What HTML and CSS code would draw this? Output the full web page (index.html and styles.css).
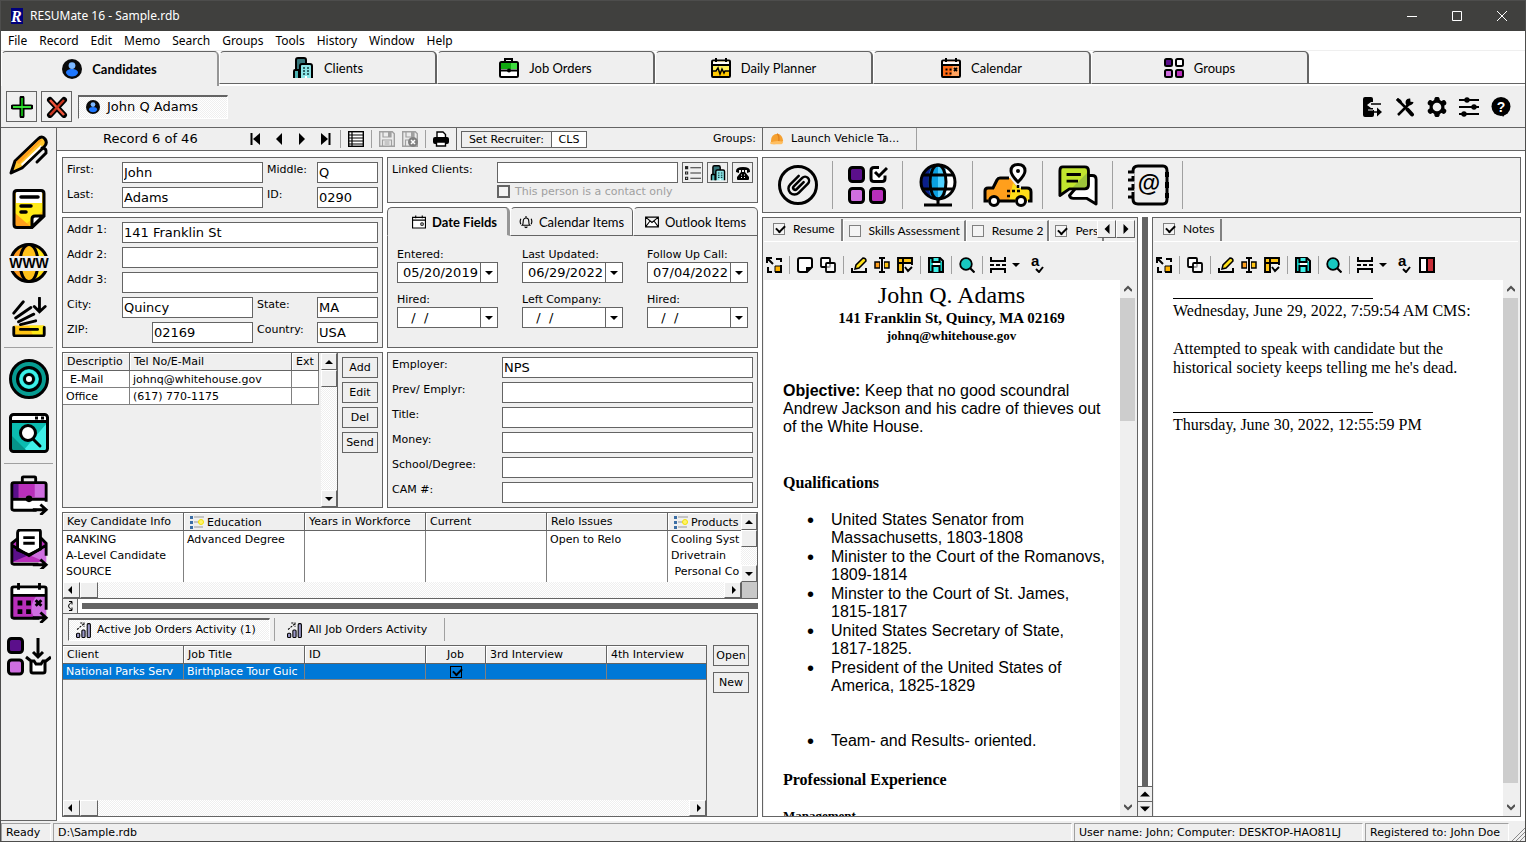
FILE: index.html
```html
<!DOCTYPE html>
<html lang="en">
<head>
<meta charset="utf-8">
<title>RESUMate 16 - Sample.rdb</title>
<link rel="stylesheet" href="styles.css">
</head>
<body>
<svg class="sprite" aria-hidden="true">
  <symbol id="person" viewBox="0 0 20 20"><circle cx="10" cy="10" r="10" fill="#0a0a0a"/><circle cx="10" cy="6.600" r="3.400" fill="#7db8ff"/><path d="M4 14c0-3 3-4 6-4s6 1 6 4c-1 2.500-3.500 3.500-6 3.500S5 16.500 4 14z" fill="#1f78ff"/></symbol>
  <symbol id="city" viewBox="0 0 20 22"><path d="M3 14V3q0-2 2-2h6q2 0 2 2v4" fill="#35757a" stroke="#000" stroke-width="2"/><path d="M1 21v-7q0-1 1-1h4v8" fill="#4db3b3" stroke="#000" stroke-width="2"/><path d="M7 21V9q0-2 2-2h8q2 0 2 2v12" fill="#8ce4e6" stroke="#000" stroke-width="2"/><path d="M10 11h2M14 11h2M10 14h2M14 14h2M10 17h2M14 17h2" stroke="#10383c" stroke-width="1.500"/><path d="M12 21v-2h2v2" fill="#fff"/></symbol>
  <symbol id="jobs" viewBox="0 0 20 20"><path d="M6 4V1h7v3" fill="none" stroke="#000" stroke-width="2"/><rect x="1" y="4" width="18" height="15" rx="1.500" fill="#fff" stroke="#000" stroke-width="2"/><path d="M2 5h16v6H2z" fill="#0fa80f"/><path d="M12 5h6v6h-6z" fill="#3fdc3f"/><path d="M1 12.500h18" stroke="#000" stroke-width="2"/><circle cx="10" cy="12.500" r="2" fill="#000"/></symbol>
  <symbol id="planner" viewBox="0 0 20 20"><rect x="1" y="2.500" width="18" height="16.500" rx="1" fill="#ffc800" stroke="#000" stroke-width="2"/><path d="M2 7h16v6H2z" fill="#fff05a"/><path d="M2 3.500h16V6H2z" fill="#fff"/><path d="M1 7h18M5 0v4M15 0v4" stroke="#000" stroke-width="2"/><path d="M2 13h3l2-3 2 6 2-5 2 4 1-2h4" fill="none" stroke="#000" stroke-width="1.500"/></symbol>
  <symbol id="calendar" viewBox="0 0 20 20"><rect x="1" y="2.500" width="18" height="16.500" rx="1" fill="#ff6a14" stroke="#000" stroke-width="2"/><path d="M12 7h6v11h-8z" fill="#ffa35f"/><path d="M2 3.500h16V6H2z" fill="#fff"/><path d="M1 7h18M5 0v4M15 0v4" stroke="#000" stroke-width="2"/><path d="M4.500 11.500h2m2 0h2M4.500 15.500h2m2 0h2M13 10l3 3m0-3l-3 3" stroke="#000" stroke-width="1.800"/></symbol>
  <symbol id="groups" viewBox="0 0 20 20"><g stroke="#000" stroke-width="2"><rect x="1" y="1" width="7" height="7" rx="1.500" fill="#5b0f8b"/><rect x="12" y="1" width="7" height="7" rx="1.500" fill="#fff"/><rect x="1" y="12" width="7" height="7" rx="1.500" fill="#cf6ee0"/><rect x="12" y="12" width="7" height="7" rx="1.500" fill="#b92fbb"/></g></symbol>
  <symbol id="plus" viewBox="0 0 22 22"><path d="M11 2v18M2 11h18" stroke="#000" stroke-width="5" stroke-linecap="round"/><path d="M11 2v18" stroke="#12a812" stroke-width="2"/><path d="M2 11h18" stroke="#38e038" stroke-width="2"/></symbol>
  <symbol id="cross" viewBox="0 0 22 22"><path d="M4 4l14 15M18 4L4 19" stroke="#000" stroke-width="6" stroke-linecap="round"/><path d="M4 4l14 15" stroke="#f0553a" stroke-width="2.500"/><path d="M18 4L4 19" stroke="#c9341f" stroke-width="2.500"/></symbol>
  <symbol id="exit" viewBox="0 0 20 20"><path d="M2 0h6q2 0 2 2v3H8L4 8l4 3h2v2h1v5q0 2-2 2H2q-2 0-2-2V2q0-2 2-2z"/><path d="M8 7h10M11 15h4" stroke="#000" stroke-width="1.600"/><path d="M14 10.500l5 4.500-5 4.500z"/><path d="M5 13h5" stroke="#efefef"/></symbol>
  <symbol id="tools" viewBox="0 0 20 20"><path d="M3 18L14 7M2 2l9 9" stroke="#000" stroke-width="2.500"/><path d="M12.500 12.500l4.500 5" stroke="#000" stroke-width="4" stroke-linecap="round"/><path d="M1 3l2-2 3 2 1 2-1.500 1.500L4 6z"/><path d="M18.500 5l-3-.3-.3-3.200c-4-.5-5.500 3-4 6.300 3 1.500 7 0 7.300-2.800z"/></symbol>
  <symbol id="gear" viewBox="0 0 20 20"><path d="M10 2.500v15M3.500 6l13 8M3.500 14l13-8" stroke="#000" stroke-width="5.500" stroke-linecap="round"/><circle cx="10" cy="10" r="7.500"/><circle cx="10" cy="10" r="4.300" fill="#efefef"/></symbol>
  <symbol id="sliders" viewBox="0 0 20 20"><path d="M0 3h20M0 10h20M0 17h20" stroke="#000" stroke-width="2"/><circle cx="8" cy="3" r="2.700"/><circle cx="15" cy="10" r="2.700"/><circle cx="5" cy="17" r="2.700"/></symbol>
  <symbol id="help" viewBox="0 0 20 20"><circle cx="10" cy="9.500" r="9.500"/><path d="M9 14h7l-4 6z"/><text x="10" y="14.500" text-anchor="middle" font-family="Liberation Sans, sans-serif" font-size="14" font-weight="700" fill="#fff">?</text></symbol>
  <symbol id="first" viewBox="0 0 12 12"><path d="M1.500 0v12" stroke="#000" stroke-width="2"/><path d="M10 0v12L3 6z"/></symbol>
  <symbol id="prev" viewBox="0 0 12 12"><path d="M9 0v12L3 6z"/></symbol>
  <symbol id="next" viewBox="0 0 12 12"><path d="M3 0v12l6-6z"/></symbol>
  <symbol id="last" viewBox="0 0 12 12"><path d="M10.500 0v12" stroke="#000" stroke-width="2"/><path d="M2 0v12l7-6z"/></symbol>
  <symbol id="list" viewBox="0 0 16 16"><rect x=".7" y=".7" width="14.600" height="14.600" fill="#fff" stroke="#000" stroke-width="1.400"/><path d="M1 4h14M1 7h14M1 10h14M1 13h14M4 1v14" stroke="#000" stroke-width="1.200"/></symbol>
  <symbol id="disk" viewBox="0 0 16 16"><path d="M.7.700h12.600l2 2v12.600H.7z" fill="#ececec" stroke="#a0a0a0" stroke-width="1.400"/><path d="M4 1v5h8V1M3.500 15V9h9v6M5.500 11h5M5.500 13h5" fill="none" stroke="#a0a0a0" stroke-width="1.200"/><path d="M9 1h3v5H9z" fill="#a0a0a0"/></symbol>
  <symbol id="diskx" viewBox="0 0 16 16"><path d="M.7.700h12.600l2 2v12.600H.7z" fill="#ececec" stroke="#a0a0a0" stroke-width="1.400"/><path d="M4 1v5h8V1M3.500 15V9h5" fill="none" stroke="#a0a0a0" stroke-width="1.200"/><path d="M9 1h3v5H9z" fill="#a0a0a0"/><circle cx="11" cy="11" r="5" fill="#808080"/><path d="M9 9l4 4m0-4l-4 4" stroke="#fff" stroke-width="1.500"/></symbol>
  <symbol id="printer" viewBox="0 0 16 16"><path d="M4 6V1h6l2.500 2.500V6" fill="#fff" stroke="#000" stroke-width="1.400"/><rect y="6" width="16" height="7" rx="2"/><path d="M3.500 11h9v4h-9z" fill="#fff" stroke="#000" stroke-width="1.400"/></symbol>
  <symbol id="pencil" viewBox="0 0 40 40"><path d="M2 38l4-12L29 4q4-4 7 0 3 4-1 8L13 33z" fill="#ffc72e" stroke="#000" stroke-width="3" stroke-linejoin="round"/><path d="M7 27L30 5q2-1 3 0L10 29z" fill="#ff9f1c"/><path d="M33 12l-20 19-1-2 20-19z" fill="#fff"/><path d="M33 13q5 0 4 5l-9 9" fill="none" stroke="#000" stroke-width="3" stroke-linecap="round"/></symbol>
  <symbol id="note" viewBox="0 0 40 40"><path d="M8 1.500h24q3 0 3 3V27L23 38.500H8q-3 0-3-3v-31q0-3 3-3z" fill="#ffc414"/><path d="M6 14h28v8L14 37H6z" fill="#ffea18"/><path d="M6 24L22 38H6z" fill="#ff9f1c"/><path d="M7 2h26v12H7z" fill="#fff"/><path d="M34 27H26q-3 0-3 3v8z" fill="#fff" stroke="#000" stroke-width="3" stroke-linejoin="round"/><path d="M8 1.500h24q3 0 3 3V27L23 38.500H8q-3 0-3-3v-31q0-3 3-3z" fill="none" stroke="#000" stroke-width="3"/><path d="M12 8h17M12 17h10M12 23h5" stroke="#000" stroke-width="3.500" stroke-linecap="round"/></symbol>
  <symbol id="www" viewBox="0 0 40 40"><circle cx="20" cy="20" r="18.500" fill="#ffc21a"/><path d="M6 9L20 2 10 15H3zM6 31l8 6-4-9H3z" fill="#ff9c1e"/><path d="M28 4l8 10h-8zM28 36l8-10h-8z" fill="#ffea18"/><g fill="none" stroke="#000" stroke-width="3"><circle cx="20" cy="20" r="18.500"/><ellipse cx="20" cy="20" rx="9" ry="18.500"/></g><path d="M0 13h40v15H0z" fill="#efefef"/><text x="20" y="25" text-anchor="middle" font-family="Liberation Sans, sans-serif" font-size="14" font-weight="700">WWW</text></symbol>
  <symbol id="stack" viewBox="0 0 40 42"><path d="M4 30h32v10H4z" fill="#ffc414"/><path d="M20 30h16v10H24z" fill="#ffea18"/><path d="M4 32v7q0 2 2 2h28q2 0 2-2v-7M11 34h18M11 29l16-4M9 26l16-8M6 22L22 11M4 17L14 5" fill="none" stroke="#000" stroke-width="3" stroke-linecap="round"/><path d="M31 1v14M25.500 10L31 15.500 37 10" fill="none" stroke="#000" stroke-width="3" stroke-linecap="round"/></symbol>
  <symbol id="target" viewBox="0 0 40 40"><g stroke="#000" stroke-width="3"><circle cx="20" cy="20" r="18.500" fill="#069c92"/><circle cx="20" cy="20" r="11.500" fill="#08bdb0"/><circle cx="20" cy="20" r="4.500" fill="#fff"/></g><circle cx="20" cy="20" r="8" fill="none" stroke="#3fefe8" stroke-width="3"/></symbol>
  <symbol id="searchwin" viewBox="0 0 40 40"><rect x="1.500" y="1.500" width="37" height="37" rx="3" fill="#0bbcb0"/><path d="M38 10v28H14z" fill="#3fefe8"/><path d="M2 22l16 16H2z" fill="#069389"/><path d="M3 2h34v6H3z" fill="#fff"/><rect x="1.500" y="1.500" width="37" height="37" rx="3" fill="none" stroke="#000" stroke-width="3"/><path d="M2 8.500h36M24 26l7 7" stroke="#000" stroke-width="3" stroke-linecap="round"/><circle cx="19" cy="20" r="7.500" fill="#fff" stroke="#000" stroke-width="3"/><path d="M26 5h3m3 0h3" stroke="#000" stroke-width="3"/></symbol>
  <symbol id="jobarrow" viewBox="0 0 40 42"><rect x="1.500" y="8" width="37" height="29" rx="2" fill="#fff"/><path d="M2 8h36v16H2z" fill="#b92fbb"/><path d="M2 8h7v16H2z" fill="#5b0f8b"/><path d="M26 8h12v16H26z" fill="#cf6ee0"/><path d="M38 28V10q0-2-2-2H4q-2 0-2 2v25q0 2 2 2h24M2 25.500h36M13 7V3q0-1 1-1h12q1 0 1 1v4" fill="none" stroke="#000" stroke-width="3"/><circle cx="20" cy="25" r="3.500"/><path d="M24 36.500h13M32 31l6 5.500-6 5.500" fill="none" stroke="#000" stroke-width="3"/></symbol>
  <symbol id="mailarrow" viewBox="0 0 40 42"><path d="M2 15L20 2l18 13v20H2z" fill="#b92fbb"/><path d="M2 16l16 12L2 35z" fill="#5b0f8b"/><path d="M22 28l16-12v19z" fill="#cf6ee0"/><path d="M8 22V4q0-3 3-3h19q2 0 2 2v18L20 27z" fill="#fff" stroke="#000" stroke-width="3"/><path d="M8 10l-6 5v20q0 2 2 2h26M32 9l6 6v13M2 17l18 11 18-11M14 9h12M14 15h12" fill="none" stroke="#000" stroke-width="3"/><path d="M24 37.500h13M32 32l6 5.500-6 5.500" fill="none" stroke="#000" stroke-width="3"/></symbol>
  <symbol id="calarrow" viewBox="0 0 40 42"><path d="M2 5h36v32H2z" fill="#b92fbb"/><path d="M38 12v25H26q-8-12 3-25z" fill="#cf6ee0"/><path d="M2 4h36v8H2z" fill="#fff"/><path d="M38 28V6q0-2-2-2H4q-2 0-2 2v29q0 2 2 2h27M2 13h36M9 0v7M31 0v7" fill="none" stroke="#000" stroke-width="3"/><path d="M8 21h5M17 21h5M8 30h5M17 30h5" stroke="#000" stroke-width="5"/><path d="M27 18l6 6m0-6l-6 6M24 36.500h13M32 31l6 5.500-6 5.500" fill="none" stroke="#000" stroke-width="3"/></symbol>
  <symbol id="groupbox" viewBox="0 0 44 40"><g stroke="#000" stroke-width="3"><rect x="1.500" y="1.500" width="14" height="14" rx="3" fill="#5b0f8b"/><rect x="1.500" y="23" width="14" height="14" rx="3" fill="#cf6ee0"/><path d="M24 25v9q0 2 2 2h10q2 0 2-2v-9" fill="#fff"/><path d="M19 20l5 4h3l2 3h5l2-3h3l5-4M31 1v18M26 15l5 5 5-5" fill="none"/></g></symbol>
  <symbol id="bullets" viewBox="0 0 15 14"><path d="M5 2h10M5 7h10M5 12h10" stroke="#333"/><path d="M0 .500h3v3H0z" fill="#222"/><path d="M.5 6h2v2h-2zM.5 11h2v2h-2z" fill="#fff" stroke="#222"/></symbol>
  <symbol id="phone" viewBox="0 0 14 14"><path d="M0 5q0-4 7-4t7 4v1l-3 1V4H3v3L0 6z"/><path d="M5 4v2l-4 5v2q0 1 1 1h10q1 0 1-1v-2L9 6V4H8v2H6V4z"/><path d="M5 9h1m2 0h1M5 11.500h1m2 0h1" stroke="#fff"/></symbol>
  <symbol id="calsmall" viewBox="0 0 15 14"><path d="M.6 2h13.800v11.400H.6zM.6 5h13.800M4 0v3M11 0v3" fill="#fff" stroke="#000" stroke-width="1.200"/><path d="M9.500 8h2.500v2.500H9.500z" fill="none" stroke="#000"/></symbol>
  <symbol id="bell" viewBox="0 0 15 15"><path d="M3.500 11q1-1 1-4c0-5 6-5 6 0q0 3 1 4zM7.500 1v2M6 12.500q1.500 2 3 0M2 4q-1.500 3 0 6M13 4q1.500 3 0 6" fill="none" stroke="#000" stroke-width="1.200"/></symbol>
  <symbol id="mail" viewBox="0 0 14 11"><path d="M.6.600h12.800v9.800H.6zM.6.600L7 6l6.400-5.400M.6 10.400L5 4.500M13.400 10.400L9 4.500" fill="#fff" stroke="#000" stroke-width="1.100"/></symbol>
  <symbol id="clip" viewBox="0 0 40 40"><circle cx="20" cy="20" r="18.500" fill="none" stroke="#000" stroke-width="3"/><path transform="rotate(45 20 20)" d="M14 13v12a6 6 0 0 0 12 0V12a4 4 0 0 0-8 0v12a2 2 0 0 0 4 0V14" fill="none" stroke="#000" stroke-width="2.500" stroke-linecap="round"/></symbol>
  <symbol id="groupcheck" viewBox="0 0 40 40"><g stroke="#000" stroke-width="3"><rect x="1.500" y="2.500" width="14" height="14" rx="3" fill="#5b0f8b"/><rect x="1.500" y="23.500" width="14" height="14" rx="3" fill="#cf6ee0"/><rect x="22.500" y="23.500" width="14" height="14" rx="3" fill="#b92fbb"/><path d="M31 2.500h-5q-3 0-3 3v8q0 3 3 3h8q3 0 3-3v-3" fill="#fff"/><path d="M27 7l4 4 8-8" fill="none"/></g></symbol>
  <symbol id="globe" viewBox="0 0 40 44"><circle cx="20" cy="19" r="17" fill="#0b1f8c"/><path d="M13 3h7v32h-7q-5-16 0-32z" fill="#0ba0e0"/><path d="M20 3h7q5 16 0 32h-7z" fill="#4fd0ff"/><path d="M27 3q10 5 10 16T27 35q4-16 0-32z" fill="#fff"/><g fill="none" stroke="#000" stroke-width="3"><circle cx="20" cy="19" r="17"/><ellipse cx="20" cy="19" rx="8" ry="17"/><path d="M20 36v5M5 12h30M5 26h30M6 42h28"/></g></symbol>
  <symbol id="taxi" viewBox="0 0 50 44"><path d="M2 38V28q0-3 3-3h5l4-8q1-2 3-2h10l8 10h9q4 0 4 4v9z" fill="#ff9f1c"/><path d="M30 20l5 5h9q4 0 4 4v9H26z" fill="#ffdf18"/><path d="M5 38H2V28q0-3 3-3h5l4-8q1-2 3-2h9M38 25h6q4 0 4 4v9h-3M16 38h16" fill="none" stroke="#000" stroke-width="3"/><g fill="#fff" stroke="#000" stroke-width="3"><circle cx="11" cy="38" r="4.500"/><circle cx="38" cy="38" r="4.500"/><path d="M35 19q-7-7-7-11 0-6.500 7-6.500T42 8q0 4-7 11z"/></g><circle cx="35" cy="8" r="2"/><path d="M24 28h3m2 0h3m2 0h3M24 33h3M35 22v3" stroke="#000" stroke-width="2.500"/></symbol>
  <symbol id="chat" viewBox="0 0 42 42"><path d="M30 11h6q4 0 4 4v26l-10-6H16q-3 0-4-3z" fill="#fff" stroke="#000" stroke-width="3" stroke-linejoin="round"/><path d="M5 2h23q4 0 4 4v15q0 4-4 4H12L2 32V6q0-4 3-4z" fill="#c1e52e"/><path d="M31 8v13q0 3-3 3H15z" fill="#9cc43a"/><path d="M5 2h23q4 0 4 4v15q0 4-4 4H12L2 32V6q0-4 3-4zM9 10h15M9 17h12" fill="none" stroke="#000" stroke-width="3" stroke-linejoin="round"/></symbol>
  <symbol id="book" viewBox="0 0 42 42"><path d="M6 7q0-5 5-5h25q4 0 4 5v28q0 5-4 5H11q-5 0-5-5z" fill="none" stroke="#000" stroke-width="3"/><path d="M5 9v24" stroke="#efefef" stroke-width="5" stroke-dasharray="3 5"/><path d="M1 8h6M1 16h6M1 25h6M1 33h6" stroke="#000" stroke-width="3"/><path d="M40 8v5M40 18v6M40 29v5" stroke="#000" stroke-width="4"/><text x="22" y="27" text-anchor="middle" font-family="Liberation Sans, sans-serif" font-size="23" font-weight="700">@</text></symbol>
  <symbol id="expand" viewBox="0 0 16 16"><path d="M9 9h5v5H9z" fill="#ffb400"/><path d="M1 6V1h5M1 1l6 6M10 2h5v3M15 8v7H9M2 10v5h4" fill="none" stroke="#000" stroke-width="2"/><path d="M9 15V9h6" fill="none" stroke="#000"/></symbol>
  <symbol id="sticky" viewBox="0 0 16 16"><path d="M3 1h10q2 0 2 2v7l-5 5H3q-2 0-2-2V3q0-2 2-2z" fill="#fff" stroke="#000" stroke-width="2"/><path d="M9 15v-5h6z"/></symbol>
  <symbol id="copy" viewBox="0 0 16 16"><rect x="1" y="1" width="9" height="9" rx="1" fill="#fff" stroke="#000" stroke-width="1.800"/><rect x="6" y="6" width="9" height="9" rx="1" fill="#fff" fill-opacity=".6" stroke="#000" stroke-width="1.800"/></symbol>
  <symbol id="edit" viewBox="0 0 16 16"><path d="M1 11v4h14v-4" fill="none" stroke="#000" stroke-width="2"/><path d="M4 12l1-4 7-7q3 0 3 3l-7 7z" fill="#ffe11a" stroke="#000" stroke-width="1.500"/></symbol>
  <symbol id="rename" viewBox="0 0 16 16"><path d="M1 5h5v6H1z" fill="#ff9f1c" stroke="#000" stroke-width="1.500"/><path d="M10 5h5v6h-5z" fill="#ffc414" stroke="#000" stroke-width="1.500"/><path d="M6 1h4v14H6z" fill="#efefef"/><path d="M8 1v14M5 1h6M5 15h6" stroke="#000" stroke-width="2"/></symbol>
  <symbol id="tableedit" viewBox="0 0 16 16"><path d="M1 1h14v5H6v9H1z" fill="#ffc414"/><path d="M15 8V1H1v14h6M1 6h14M6 1v14M8 10l3 4 4-4" fill="none" stroke="#000" stroke-width="1.900"/></symbol>
  <symbol id="savec" viewBox="0 0 16 16"><path d="M1 1h11l3 3v11H1z" fill="#fff" stroke="#000" stroke-width="2"/><path d="M2 2h3v12H2zM12 3l2 2v9h-2z" fill="#15c9c0"/><path d="M4.500 1v4h7V1M4.500 15V9h7v6" fill="#3fefe8" stroke="#000" stroke-width="2"/></symbol>
  <symbol id="search" viewBox="0 0 16 16"><circle cx="7" cy="7" r="5.800" fill="#18c8c0" stroke="#000" stroke-width="1.800"/><path d="M11 11l4.500 4.500" stroke="#000" stroke-width="2.200"/></symbol>
  <symbol id="breaks" viewBox="0 0 16 16"><path d="M1 0v4h14V0M1 16v-4h14v4" fill="none" stroke="#000" stroke-width="2"/><path d="M0 8h4m2 0h4m2 0h4" stroke="#000" stroke-width="2"/></symbol>
  <symbol id="spell" viewBox="0 0 16 16"><text x="2" y="9" font-family="Liberation Sans, sans-serif" font-size="15" font-weight="700">a</text><path d="M7 12l3 3 4-5" fill="none" stroke="#000" stroke-width="2"/></symbol>
  <symbol id="panel" viewBox="0 0 16 16"><path d="M1 1h14v14H1z" fill="#fff"/><path d="M8 1h7v14H8z" fill="#c92f38"/><path d="M1 1h14v14H1zM8 1v14" fill="none" stroke="#000" stroke-width="2"/></symbol>
  <symbol id="chart" viewBox="0 0 15 15"><g fill="#9a98c8" stroke="#000"><rect x=".5" y="10.500" width="3" height="4" rx="1"/><rect x="5.500" y="7.500" width="3" height="7" rx="1"/><rect x="10.500" y="1.500" width="3" height="13" rx="1"/></g><path d="M1 7l6-5M4 1h3.500v3.500" fill="none" stroke="#000" stroke-dasharray="2 1"/></symbol>
  <symbol id="hat" viewBox="0 0 16 14"><path d="M1 10q0-9 8-9 5 1 6 8l-2 3-9 1z" fill="#f5a030"/><path d="M8 1q3 2 2 9" fill="none" stroke="#e08020" stroke-width="1.500"/><path d="M0 11q7-3 15-1 0 2-2 3H2q-2 0-2-2z" fill="#ffbf62"/></symbol>
  <symbol id="tree" viewBox="0 0 14 14"><path d="M4 2h10M4 7h6M4 12h9" stroke="#999"/><path d="M0 1h3v3H0zM0 6h3v3H0zM0 11h3v3H0z" fill="#3b6ea5"/><circle cx="11" cy="7" r="2.500" fill="#fff36b" stroke="#f2e200"/></symbol>
  <symbol id="up" viewBox="0 0 8 8"><path d="M0 6h8L4 2z"/></symbol>
  <symbol id="down" viewBox="0 0 8 8"><path d="M0 2h8L4 6z"/></symbol>
  <symbol id="left" viewBox="0 0 8 8"><path d="M6 0v8L2 4z"/></symbol>
  <symbol id="right" viewBox="0 0 8 8"><path d="M2 0v8l4-4z"/></symbol>
  <symbol id="chevup" viewBox="0 0 8 8"><path d="M0 6l4-4 4 4" fill="none" stroke="#505050" stroke-width="2"/></symbol>
  <symbol id="chevdown" viewBox="0 0 8 8"><path d="M0 2l4 4 4-4" fill="none" stroke="#505050" stroke-width="2"/></symbol>
  <symbol id="swap" viewBox="0 0 8 12"><path d="M6 2Q-1 6 6 10M3 1.500h3v3M3 10.500h3v-3" fill="none" stroke="#000"/></symbol>
</svg>

<div class="window">
  <header class="titlebar">
    <svg class="logo" viewBox="0 0 12 16" aria-hidden="true"><rect width="12" height="16" fill="#00007c"/><text x="0" y="14" font-family="Liberation Serif, serif" font-size="16" font-weight="700" font-style="italic" fill="#fff">R</text></svg>
    <h1 class="title">RESUMate 16 - Sample.rdb</h1>
    <button class="winbtn" aria-label="Minimize"><svg viewBox="0 0 10 10"><path d="M0 5.500h10" stroke="#fff"/></svg></button>
    <button class="winbtn" aria-label="Maximize"><svg viewBox="0 0 10 10"><path d="M.5.500h9v9h-9z" fill="none" stroke="#fff"/></svg></button>
    <button class="winbtn" aria-label="Close"><svg viewBox="0 0 10 10"><path d="M0 0l10 10M10 0L0 10" stroke="#fff"/></svg></button>
  </header>

  <nav class="menubar">
    <button>File</button><button>Record</button><button>Edit</button><button>Memo</button><button>Search</button><button>Groups</button><button>Tools</button><button>History</button><button>Window</button><button>Help</button>
  </nav>

  <nav class="maintabs">
    <button class="maintab on"><svg class="i20"><use href="#person"/></svg>Candidates</button>
    <button class="maintab"><svg class="i22"><use href="#city"/></svg>Clients</button>
    <button class="maintab"><svg class="i20"><use href="#jobs"/></svg>Job Orders</button>
    <button class="maintab"><svg class="i20"><use href="#planner"/></svg>Daily Planner</button>
    <button class="maintab"><svg class="i20"><use href="#calendar"/></svg>Calendar</button>
    <button class="maintab"><svg class="i20"><use href="#groups"/></svg>Groups</button>
    <span class="tabfill"></span>
  </nav>

  <div class="toolbar">
    <button class="sqbtn" aria-label="Add record"><svg class="i22"><use href="#plus"/></svg></button>
    <button class="sqbtn" aria-label="Delete record"><svg class="i22"><use href="#cross"/></svg></button>
    <button class="recordtab"><svg class="i14"><use href="#person"/></svg>John Q Adams</button>
    <div class="toolicons">
      <button aria-label="Exit"><svg class="i20"><use href="#exit"/></svg></button>
      <button aria-label="Tools"><svg class="i20"><use href="#tools"/></svg></button>
      <button aria-label="Settings"><svg class="i20"><use href="#gear"/></svg></button>
      <button aria-label="Options"><svg class="i20"><use href="#sliders"/></svg></button>
      <button aria-label="Help"><svg class="i20"><use href="#help"/></svg></button>
    </div>
  </div>

  <div class="workspace">
    <aside class="sidebar">
      <button aria-label="Edit"><svg><use href="#pencil"/></svg></button>
      <button aria-label="Notes"><svg><use href="#note"/></svg></button>
      <button aria-label="Web"><svg><use href="#www"/></svg></button>
      <button aria-label="Collect"><svg><use href="#stack"/></svg></button>
      <hr>
      <button aria-label="Target"><svg><use href="#target"/></svg></button>
      <button aria-label="Find"><svg><use href="#searchwin"/></svg></button>
      <hr>
      <button aria-label="Send to job"><svg><use href="#jobarrow"/></svg></button>
      <button aria-label="Send mail"><svg><use href="#mailarrow"/></svg></button>
      <button aria-label="Schedule"><svg><use href="#calarrow"/></svg></button>
      <button aria-label="Add to group"><svg class="wide"><use href="#groupbox"/></svg></button>
    </aside>

    <main class="content">
      <div class="recordbar">
        <div class="recordleft">
          <div class="recordnav">
            <span class="count">Record 6 of 46</span>
            <button aria-label="First"><svg class="i12"><use href="#first"/></svg></button>
            <button aria-label="Previous"><svg class="i12"><use href="#prev"/></svg></button>
            <button aria-label="Next"><svg class="i12"><use href="#next"/></svg></button>
            <button aria-label="Last"><svg class="i12"><use href="#last"/></svg></button>
            <i class="vsep"></i>
            <button aria-label="List"><svg class="i16"><use href="#list"/></svg></button>
            <i class="vsep"></i>
            <button aria-label="Save" disabled><svg class="i16"><use href="#disk"/></svg></button>
            <button aria-label="Discard" disabled><svg class="i16"><use href="#diskx"/></svg></button>
            <i class="vsep"></i>
            <button aria-label="Print"><svg class="i16"><use href="#printer"/></svg></button>
          </div>
          <div class="recruiter"><button>Set Recruiter:</button><span>CLS</span></div>
          <span class="grouplabel">Groups:</span>
        </div>
        <div class="recordright"><button class="grouptab"><svg class="i14"><use href="#hat"/></svg>Launch Vehicle Ta...</button></div>
      </div>

      <div class="panes">
        <div class="leftpane">
          <div class="duo">
            <div class="stack">
              <section class="panel form name">
                <label for="first-name">First:</label><input id="first-name" value="John">
                <label for="middle">Middle:</label><input id="middle" value="Q">
                <label for="last-name">Last:</label><input id="last-name" value="Adams">
                <label for="rid">ID:</label><input id="rid" value="0290">
              </section>
              <section class="panel form addr">
                <label for="a1">Addr 1:</label><input class="full" id="a1" value="141 Franklin St">
                <label for="a2">Addr 2:</label><input class="full" id="a2">
                <label for="a3">Addr 3:</label><input class="full" id="a3">
                <label for="cty">City:</label><input id="cty" value="Quincy">
                <label for="state">State:</label><input id="state" value="MA">
                <label for="zip">ZIP:</label><input class="zip" id="zip" value="02169">
                <label for="country">Country:</label><input id="country" value="USA">
              </section>
            </div>
            <div class="stack">
              <section class="panel linked">
                <label for="lc">Linked Clients:</label>
                <div class="linkedrow"><input id="lc">
                  <button class="mini" aria-label="List"><svg class="i16"><use href="#bullets"/></svg></button>
                  <button class="mini" aria-label="Client"><svg class="i16"><use href="#city"/></svg></button>
                  <button class="mini" aria-label="Call"><svg class="i14"><use href="#phone"/></svg></button>
                </div>
                <label class="contact"><input type="checkbox" disabled>This person is a contact only</label>
              </section>
              <section class="dates">
                <div class="datetabs">
                  <button class="datetab on"><svg class="i14"><use href="#calsmall"/></svg>Date Fields</button>
                  <button class="datetab"><svg class="i14"><use href="#bell"/></svg>Calendar Items</button>
                  <button class="datetab"><svg class="i14"><use href="#mail"/></svg>Outlook Items</button>
                </div>
                <div class="dategrid">
                  <div><label for="d1">Entered:</label><div class="combo"><input id="d1" value="05/20/2019"><button aria-label="Pick date"><svg class="i8"><use href="#down"/></svg></button></div></div>
                  <div><label for="d2">Last Updated:</label><div class="combo"><input id="d2" value="06/29/2022"><button aria-label="Pick date"><svg class="i8"><use href="#down"/></svg></button></div></div>
                  <div><label for="d3">Follow Up Call:</label><div class="combo"><input id="d3" value="07/04/2022"><button aria-label="Pick date"><svg class="i8"><use href="#down"/></svg></button></div></div>
                  <div><label for="d4">Hired:</label><div class="combo"><input id="d4" value="  /  /"><button aria-label="Pick date"><svg class="i8"><use href="#down"/></svg></button></div></div>
                  <div><label for="d5">Left Company:</label><div class="combo"><input id="d5" value="  /  /"><button aria-label="Pick date"><svg class="i8"><use href="#down"/></svg></button></div></div>
                  <div><label for="d6">Hired:</label><div class="combo"><input id="d6" value="  /  /"><button aria-label="Pick date"><svg class="i8"><use href="#down"/></svg></button></div></div>
                </div>
              </section>
            </div>
          </div>

          <div class="duo">
            <section class="panel phones">
              <div class="phonetable">
                <table class="grid">
                  <colgroup><col class="c67"><col><col class="c27"></colgroup>
                  <thead><tr><th>Descriptio</th><th>Tel No/E-Mail</th><th>Ext</th></tr></thead>
                  <tbody><tr><td class="ind">E-Mail</td><td>johnq@whitehouse.gov</td><td></td></tr><tr><td>Office</td><td>(617) 770-1175</td><td></td></tr></tbody>
                </table>
              </div>
              <div class="vscroll"><button aria-label="Scroll up"><svg class="i8"><use href="#up"/></svg></button><span class="thumb"></span><button class="end" aria-label="Scroll down"><svg class="i8"><use href="#down"/></svg></button></div>
              <div class="btncol"><button class="btn">Add</button><button class="btn">Edit</button><button class="btn">Del</button><button class="btn">Send</button></div>
            </section>
            <section class="panel form work">
              <label for="w1">Employer:</label><input id="w1" value="NPS">
              <label for="w2">Prev/ Emplyr:</label><input id="w2">
              <label for="w3">Title:</label><input id="w3">
              <label for="w4">Money:</label><input id="w4">
              <label for="w5">School/Degree:</label><input id="w5">
              <label for="w6">CAM #:</label><input id="w6">
            </section>
          </div>

          <div class="lower">
            <section class="keyinfo">
              <div class="keytop">
                <table class="grid key">
                  <colgroup><col class="c121"><col class="c121"><col class="c121"><col class="c121"><col class="c121"><col></colgroup>
                  <thead><tr><th>Key Candidate Info</th><th><svg class="i14"><use href="#tree"/></svg>Education</th><th>Years in Workforce</th><th>Current</th><th>Relo Issues</th><th><svg class="i14"><use href="#tree"/></svg>Products</th></tr></thead>
                  <tbody><tr><td>RANKING<br>A-Level Candidate<br>SOURCE</td><td>Advanced Degree</td><td></td><td></td><td>Open to Relo</td><td>Cooling Syst<br>Drivetrain<br>&nbsp;Personal Co</td></tr></tbody>
                </table>
                <div class="vscroll"><button aria-label="Scroll up"><svg class="i8"><use href="#up"/></svg></button><span class="thumb"></span><button class="end" aria-label="Scroll down"><svg class="i8"><use href="#down"/></svg></button></div>
              </div>
              <div class="hrow"><div class="hscroll"><button aria-label="Scroll left"><svg class="i8"><use href="#left"/></svg></button><span class="thumb"></span><button class="end" aria-label="Scroll right"><svg class="i8"><use href="#right"/></svg></button></div><span class="corner"></span></div>
            </section>
            <div class="hsplit"><button aria-label="Swap panes"><svg class="i12"><use href="#swap"/></svg></button><span></span></div>
            <section class="panel activity">
              <div class="acttabs">
                <button class="acttab on"><svg class="i16"><use href="#chart"/></svg>Active Job Orders Activity (1)</button>
                <button class="acttab"><svg class="i16"><use href="#chart"/></svg>All Job Orders Activity</button>
              </div>
              <div class="actbody">
                <div class="acttable">
                  <table class="grid jobs">
                    <colgroup><col class="c121"><col class="c121"><col class="c121"><col class="c60"><col class="c121"><col></colgroup>
                    <thead><tr><th>Client</th><th>Job Title</th><th>ID</th><th class="mid">Job</th><th>3rd Interview</th><th>4th Interview</th></tr></thead>
                    <tbody><tr><td>National Parks Serv</td><td>Birthplace Tour Guic</td><td></td><td class="mid"><input type="checkbox" checked aria-label="Job"></td><td></td><td></td></tr></tbody>
                  </table>
                  <div class="hscroll"><button aria-label="Scroll left"><svg class="i8"><use href="#left"/></svg></button><span class="thumb"></span><button class="end" aria-label="Scroll right"><svg class="i8"><use href="#right"/></svg></button></div>
                </div>
                <div class="actbtns"><button class="btn">Open</button><button class="btn">New</button></div>
              </div>
            </section>
          </div>
        </div>

        <div class="rightpane">
          <div class="panel bigicons">
            <button aria-label="Attachments"><svg><use href="#clip"/></svg></button>
            <button aria-label="Group membership"><svg><use href="#groupcheck"/></svg></button>
            <button aria-label="Web search"><svg class="tall"><use href="#globe"/></svg></button>
            <button aria-label="Directions"><svg class="cab"><use href="#taxi"/></svg></button>
            <button aria-label="Messages"><svg><use href="#chat"/></svg></button>
            <button aria-label="Address book"><svg class="bk"><use href="#book"/></svg></button>
          </div>
          <div class="docs">
            <section class="doc">
              <div class="doctabs">
                <label class="doctab on"><input type="checkbox" checked>Resume</label>
                <label class="doctab"><input type="checkbox">Skills Assessment</label>
                <label class="doctab"><input type="checkbox">Resume 2</label>
                <label class="doctab cut"><input type="checkbox" checked>Pers</label>
                <div class="tabscroll"><button aria-label="Tabs left"><svg><use href="#left"/></svg></button><button aria-label="Tabs right"><svg><use href="#right"/></svg></button></div>
              </div>
              <div class="doctools">
                <button aria-label="Expand"><svg class="i16"><use href="#expand"/></svg></button><i class="vsep"></i>
                <button aria-label="New note"><svg class="i16"><use href="#sticky"/></svg></button>
                <button aria-label="Copy"><svg class="i16"><use href="#copy"/></svg></button><i class="vsep"></i>
                <button aria-label="Edit"><svg class="i16"><use href="#edit"/></svg></button>
                <button aria-label="Rename"><svg class="i16"><use href="#rename"/></svg></button>
                <button aria-label="Fields"><svg class="i16"><use href="#tableedit"/></svg></button><i class="vsep"></i>
                <button aria-label="Save"><svg class="i16"><use href="#savec"/></svg></button><i class="vsep"></i>
                <button aria-label="Search"><svg class="i16"><use href="#search"/></svg></button><i class="vsep"></i>
                <button aria-label="Page break"><svg class="i16"><use href="#breaks"/></svg></button>
                <button class="dd" aria-label="More breaks"><svg class="i8"><use href="#down"/></svg></button>
                <button aria-label="Spelling"><svg class="i16"><use href="#spell"/></svg></button>
              </div>
              <div class="docbody">
                <article class="resume">
                  <h2>John Q. Adams</h2>
                  <p class="street">141 Franklin St, Quincy, MA 02169</p>
                  <p class="mailto">johnq@whitehouse.gov</p>
                  <p class="objective"><b>Objective:</b> Keep that no good scoundral Andrew Jackson and his cadre of thieves out of the White House.</p>
                  <h3>Qualifications</h3>
                  <ul>
                    <li>United States Senator from Massachusetts, 1803-1808</li>
                    <li>Minister to the Court of the Romanovs, 1809-1814</li>
                    <li>Minster to the Court of St. James, 1815-1817</li>
                    <li>United States Secretary of State, 1817-1825.</li>
                    <li>President of the United States of America, 1825-1829</li>
                    <li class="gap">Team- and Results- oriented.</li>
                  </ul>
                  <h3 class="prof">Professional Experience</h3>
                  <h4>Management</h4>
                </article>
                <div class="docscroll"><button aria-label="Scroll up"><svg class="i8"><use href="#chevup"/></svg></button><span class="bar short"></span><button class="end" aria-label="Scroll down"><svg class="i8"><use href="#chevdown"/></svg></button></div>
              </div>
            </section>
            <div class="vsplit"><span></span><button aria-label="Move up"><svg><use href="#up"/></svg></button><button aria-label="Move down"><svg><use href="#down"/></svg></button></div>
            <section class="doc">
              <div class="doctabs">
                <label class="doctab on"><input type="checkbox" checked>Notes</label>
              </div>
              <div class="doctools">
                <button aria-label="Expand"><svg class="i16"><use href="#expand"/></svg></button><i class="vsep"></i>
                <button aria-label="Copy"><svg class="i16"><use href="#copy"/></svg></button><i class="vsep"></i>
                <button aria-label="Edit"><svg class="i16"><use href="#edit"/></svg></button>
                <button aria-label="Rename"><svg class="i16"><use href="#rename"/></svg></button>
                <button aria-label="Fields"><svg class="i16"><use href="#tableedit"/></svg></button><i class="vsep"></i>
                <button aria-label="Save"><svg class="i16"><use href="#savec"/></svg></button><i class="vsep"></i>
                <button aria-label="Search"><svg class="i16"><use href="#search"/></svg></button><i class="vsep"></i>
                <button aria-label="Page break"><svg class="i16"><use href="#breaks"/></svg></button>
                <button class="dd" aria-label="More breaks"><svg class="i8"><use href="#down"/></svg></button>
                <button aria-label="Spelling"><svg class="i16"><use href="#spell"/></svg></button>
                <button aria-label="Side panel"><svg class="i16"><use href="#panel"/></svg></button>
              </div>
              <div class="docbody">
                <article class="notes">
                  <hr><p>Wednesday, June 29, 2022, 7:59:54 AM CMS:</p>
                  <p>Attempted to speak with candidate but the historical society keeps telling me he's dead.</p>
                  <hr><p>Thursday, June 30, 2022, 12:55:59 PM</p>
                </article>
                <div class="docscroll"><button aria-label="Scroll up"><svg class="i8"><use href="#chevup"/></svg></button><span class="bar"></span><button class="end" aria-label="Scroll down"><svg class="i8"><use href="#chevdown"/></svg></button></div>
              </div>
            </section>
          </div>
        </div>
      </div>
    </main>
  </div>

  <footer class="status">
    <span class="ready">Ready</span>
    <span class="path">D:\Sample.rdb</span>
    <span class="user">User name: John; Computer: DESKTOP-HAO81LJ</span>
    <span class="owner">Registered to: John Doe</span>
    <svg class="i14" viewBox="0 0 14 14" aria-hidden="true"><path d="M1 14L14 1M5 14l9-9M9 14l5-5" stroke="#888"/></svg>
  </footer>
</div>
</body>
</html>
```

FILE: styles.css
```css
* { box-sizing: border-box; }
body { margin: 0; font: 11px/14px "DejaVu Sans", Verdana, sans-serif; color: #000; background: #fff; }
button, input { font: inherit; color: inherit; margin: 0; padding: 0; border: 0; border-radius: 0; background: none; }
svg { display: block; flex: none; }
.sprite { display: none; }
.i8 { width: 8px; height: 8px; }
.i12 { width: 12px; height: 12px; }
.i14 { width: 14px; height: 14px; }
.i16 { width: 16px; height: 16px; }
.i20 { width: 20px; height: 20px; }
.i22 { width: 22px; height: 22px; }
button { display: flex; align-items: center; justify-content: center; }

.window { display: flex; flex-direction: column; height: 100vh; border: 1px solid #4d4d4c; background: #efefef; }
.titlebar { display: flex; align-items: center; height: 30px; flex: none; background: #40403e; color: #fff; padding: 0 1px 0 10px; }
.logo { width: 12px; height: 16px; }
.title { flex: 1; margin: 0 0 0 7px; font: 12px/16px "Noto Sans", sans-serif; }
.winbtn { width: 45px; height: 30px; }
.winbtn svg { width: 10px; height: 10px; }
.menubar { display: flex; gap: 12px; height: 20px; flex: none; padding-left: 7px; background: #fff; border-bottom: 1px solid #efefef; font: 12px/16px "Noto Sans", sans-serif; }
.maintabs { display: flex; height: 35px; flex: none; background: #fff; font: 13px/18px Lato, sans-serif; }
.maintab { flex: 0 1 218px; gap: 10px; margin-bottom: 2px; background: #efefef; border: 1px solid #646464; border-left-color: #fff; border-right-width: 2px; border-radius: 5px 5px 0 0; }
.maintab.on { margin-bottom: 0; border-bottom: 0; font-weight: 700; border-right-color: #969696; }
.tabfill { flex: 1; margin-bottom: 2px; border-bottom: 1px solid #646464; }

.toolbar { display: flex; align-items: center; height: 41px; flex: none; padding: 0 14px 0 5px; }
.sqbtn { width: 31px; height: 31px; border: 1px solid #646464; margin-right: 4px; }
.recordtab, .acttab.on, .hscroll, .vscroll { background: repeating-conic-gradient(#fff 0 25%, #efefef 0 50%) 0 0 / 2px 2px; }
.recordtab { justify-content: flex-start; gap: 7px; width: 150px; height: 24px; margin-left: 2px; padding-left: 7px; font-size: 13px; line-height: 16px; border: 1px solid #fff; border-top: 2px solid #646464; border-left: 1px solid #646464; }
.toolicons { display: flex; gap: 12px; margin-left: auto; }

.workspace { flex: 1; min-height: 0; display: flex; border-top: 1px solid #646464; }
.sidebar { width: 56px; flex: none; padding: 7px 3px 0; border-right: 1px solid #646464; border-bottom: 1px solid #646464; display: flex; flex-direction: column; align-items: center; gap: 14px; }
.sidebar svg { width: 40px; height: 40px; }
.sidebar svg.wide { width: 44px; }
.sidebar hr { width: 100%; margin: -4px 0 -3px; border: 0; border-top: 1px solid #a0a0a0; flex: none; }
.content { flex: 1; min-width: 0; display: flex; flex-direction: column; background: #fff; }
.recordbar, .panes { display: grid; grid-template-columns: minmax(0, 696fr) minmax(0, 759fr); column-gap: 4px; }
.recordbar { height: 23px; flex: none; background: #efefef; border-bottom: 1px solid #646464; padding: 0 4px 0 5px; }
.recordleft, .recordright, .recordnav { display: flex; align-items: center; }
.recordright { border-left: 1px solid #646464; align-items: stretch; }
.recordnav { flex: 0 0 395px; align-self: stretch; gap: 7px; border-right: 1px solid #646464; padding: 0 7px 0 41px; justify-content: flex-end; }
.recordnav .count { font-size: 13px; margin-right: auto; white-space: nowrap; }
.recordnav button { min-width: 16px; }
.vsep { width: 1px; height: 18px; background: #a0a0a0; }
.recruiter { display: flex; width: 126px; height: 17px; margin-left: 4px; border: 1px solid #646464; background: #fff; line-height: 15px; white-space: nowrap; }
.recruiter button { flex: 0 0 90px; background: #efefef; border-right: 1px solid #646464; }
.recruiter span { flex: 1; text-align: center; }
.grouplabel { margin: 0 2px 0 auto; }
.grouptab { justify-content: flex-start; gap: 7px; width: 154px; padding-left: 7px; border-right: 1px solid #a0a0a0; white-space: nowrap; }

.panes { flex: 1; min-height: 0; padding: 6px 4px 4px 5px; }
.leftpane, .rightpane { display: flex; flex-direction: column; gap: 4px; min-width: 0; min-height: 0; }
.duo { display: grid; grid-template-columns: minmax(0, 321fr) minmax(0, 371fr); gap: 4px; }
.stack { display: flex; flex-direction: column; gap: 4px; min-width: 0; }
.panel { border: 1px solid #646464; background: #efefef; }
.form { display: grid; gap: 4px 0; padding: 4px; }
.form input, .linked input:not([type]), .combo { height: 21px; border: 1px solid #646464; background: #fff; }
.form input, .linked input:not([type]) { width: 100%; min-width: 0; font-size: 13px; line-height: 18px; padding: 0 1px 1px; }
.form label, .linked > label { line-height: 15px; white-space: nowrap; }
.name { grid-template-columns: 55px 1fr 54px 61px; }
.addr { grid-template-columns: 55px 1fr 64px 61px; }
.addr .full { grid-column: span 3; }
.name label:nth-of-type(even), .addr label[for="state"], .addr label[for="country"] { padding-left: 4px; }
.addr .zip { width: auto; margin-left: 30px; }
.work { grid-template-columns: 110px 1fr; }

.linked { display: grid; grid-template-columns: 105px 1fr; gap: 1px 0; padding: 4px; height: 46px; }
.linkedrow { display: flex; gap: 4px; }
.linkedrow input { flex: 1; }
.mini { width: 21px; height: 21px; flex: none; border: 1px solid #646464; }
.linked .contact { grid-column: 2; display: flex; align-items: center; gap: 5px; color: #a0a0a0; line-height: 13px; }
input[type=checkbox] { appearance: none; width: 12px; height: 12px; flex: none; border: 1px solid #808080; background: #f4f4f4; }
input[type=checkbox]:checked { position: relative; }
input[type=checkbox]:checked::after { content: ""; position: absolute; left: 2px; top: 1px; width: 7px; height: 4px; border: solid #000; border-width: 0 0 2px 2px; rotate: -45deg; }
.contact input[type=checkbox] { border: 2px solid #646464; width: 13px; height: 13px; }

.dates { flex: 1; display: flex; flex-direction: column; }
.datetabs { display: grid; grid-template-columns: 123fr 123fr 125fr; height: 29px; font: 13px/18px Lato, sans-serif; }
.datetab { gap: 6px; white-space: nowrap; background: #efefef; border: 1px solid #646464; border-left-color: #fff; border-radius: 5px 5px 0 0; }
.datetab.on { font-weight: 700; padding-left: 14px; border-bottom-color: #efefef; border-left-color: #646464; border-right: 3px solid #969696; }
.dategrid { flex: 1; display: grid; grid-template-columns: repeat(3, minmax(0, 1fr)); align-content: start; gap: 9px 24px; padding: 11px 9px 0; border: 1px solid #646464; border-top: 0; background: #efefef; }
.dategrid label { display: block; line-height: 15px; white-space: nowrap; }
.combo { display: flex; }
.combo input { flex: 1; min-width: 0; font-size: 13px; line-height: 18px; padding-left: 5px; white-space: pre; }
.combo button { width: 17px; flex: none; border-left: 1px solid #646464; }

.grid { width: 100%; table-layout: fixed; border-collapse: separate; border-spacing: 0; }
.grid th, .grid td { overflow: hidden; white-space: nowrap; padding: 1px 0 0 3px; text-align: left; font-weight: 400; border-right: 1px solid #808080; }
.grid th { height: 18px; padding-left: 4px; background: #efefef; border-right-color: #646464; border-bottom: 1px solid #646464; box-shadow: inset 1px 1px #fff; }
.grid td { height: 17px; background: #fff; border-bottom: 1px solid #808080; }
.grid th svg { display: inline-block; vertical-align: -3px; margin: 0 3px 0 2px; }
.grid .ind { padding-left: 7px; }
.grid .mid { text-align: center; padding-left: 0; }
.c67 { width: 67px; } .c27 { width: 27px; } .c121 { width: 121px; } .c60 { width: 60px; }
.phones { display: flex; }
.phonetable { flex: 1; min-width: 0; padding-right: 2px; }
.vscroll { width: 17px; flex: none; display: flex; flex-direction: column; border-right: 1px solid #646464; }
.vscroll button, .vscroll .thumb, .hscroll button, .hscroll .thumb, .tabscroll button { flex: none; width: 17px; height: 17px; background: #efefef; border: 1px solid #fff; border-right-color: #646464; border-bottom-color: #646464; }
.vscroll button, .vscroll .thumb { width: 16px; }
.vscroll .end { margin-top: auto; }
.hscroll { flex: 1; display: flex; height: 16px; }
.hscroll button, .hscroll .thumb { height: 16px; }
.hscroll button { padding-right: 3px; }
.hscroll button.end { padding: 0 0 0 2px; }
.hscroll .thumb { width: 18px; }
.hscroll .end { margin-left: auto; }
.btncol { flex: none; display: flex; flex-direction: column; gap: 4px; padding: 4px; }
.btn { width: 36px; height: 21px; border: 1px solid #646464; }

.lower { flex: 1; min-height: 0; display: flex; flex-direction: column; }
.keyinfo { flex: none; border: 1px solid #646464; }
.keytop { display: flex; height: 69px; }
.keytop .vscroll { width: 16px; border-right: 0; }
.key td { height: 51px; line-height: 16px; vertical-align: top; border-bottom: 0; }
.key th:last-child, .key td:last-child { border-right: 0; }
.hrow { display: flex; }
.corner { width: 16px; height: 16px; background: #c8c8c8; border-left: 1px solid #646464; }
.hsplit { display: flex; align-items: center; height: 14px; flex: none; border-left: 1px solid #646464; background: #fff; }
.hsplit button { width: 15px; height: 14px; background: #efefef; border-right: 1px solid #646464; }
.hsplit span { flex: 1; height: 6px; margin-left: 4px; background: #646464; }
.activity { flex: 1; min-height: 0; display: flex; flex-direction: column; }
.acttabs { display: flex; height: 31px; flex: none; padding: 4px 0 4px 5px; }
.acttab { width: 170px; justify-content: flex-start; gap: 5px; padding-left: 12px; border-right: 1px solid #a0a0a0; white-space: nowrap; }
.acttab.on { width: 202px; padding-left: 7px; margin-right: 5px; border: 1px solid #fff; border-top: 2px solid #646464; border-left-color: #646464; position: relative; }
.acttab.on::after { content: ""; position: absolute; right: -6px; top: -2px; height: 23px; border-right: 1px solid #a0a0a0; }
.actbody { flex: 1; min-height: 0; display: flex; }
.acttable { flex: 1; min-width: 0; display: flex; flex-direction: column; justify-content: space-between; border-top: 1px solid #646464; border-right: 1px solid #646464; }
.acttable .hscroll { flex: none; }
.jobs th:last-child, .jobs td:last-child { border-right: 0; }
.jobs td { height: 16px; background: #0078d7; color: #fff; line-height: 14px; }
.jobs input[type=checkbox] { display: block; margin: 0 auto; background: #0078d7; border-color: #000; }
.actbtns { flex: none; display: flex; flex-direction: column; gap: 6px; padding: 0 8px 0 6px; }

.bigicons { display: flex; height: 56px; flex: none; padding: 3px 0; }
.bigicons button { width: 70px; border-right: 1px solid #a0a0a0; }
.bigicons svg { width: 40px; height: 42px; }
.bigicons svg.cab { width: 50px; height: 44px; }
.bigicons svg.tall { height: 44px; }
.bigicons svg.bk { width: 42px; }
.docs { flex: 1; min-height: 0; display: grid; grid-template-columns: minmax(0, 376fr) 14px minmax(0, 369fr); }
.doc { min-height: 0; display: flex; flex-direction: column; border: 1px solid #646464; background: #efefef; padding: 1px 2px 0 1px; }
.doctabs { display: flex; align-items: flex-end; height: 23px; flex: none; overflow: hidden; font: 12px/16px Lato, sans-serif; position: relative; border-bottom: 1px solid #fff; }
.doctab { display: flex; align-items: center; gap: 8px; height: 21px; padding: 0 4px 0 5px; white-space: nowrap; border-left: 1px solid #fff; border-top: 1px solid #fff; border-right: 2px solid #808080; }
.doctab.on { height: 23px; padding: 0 6px 2px 9px; border-left: 0; }
.tabscroll { position: absolute; right: 0; top: 1px; display: flex; }
.tabscroll button { width: 19px; height: 18px; }
.tabscroll svg, .vsplit svg { width: 10px; height: 10px; }
.doctools { display: flex; align-items: center; gap: 7px; height: 38px; flex: none; padding: 8px 0 0 2px; }
.doctools .dd { margin: 0 2px 0 -1px; }
.docbody { flex: 1; min-height: 0; display: flex; background: #fff; }
.resume, .notes { flex: 1; min-width: 0; overflow: hidden; }
.resume { padding: 1px 0 0 19px; font: 16px/18px "Liberation Sans", Arial, sans-serif; }
.resume h2, .resume .street, .resume .mailto, .resume h3, .resume h4 { font-family: "Liberation Serif", "Times New Roman", serif; margin: 0; }
.resume h2 { font-size: 24px; line-height: 28px; font-weight: 400; text-align: center; }
.resume .street { font-size: 15px; line-height: 18px; font-weight: 700; text-align: center; }
.resume .mailto { font-size: 13px; line-height: 18px; font-weight: 700; text-align: center; }
.resume .objective { margin: 37px 12px 37px 0; }
.resume h3 { font-size: 16px; line-height: 20px; }
.resume ul { margin: 18px 12px 0 0; padding-left: 24px; list-style: none; }
.resume li { display: flex; margin-bottom: 1px; }
.resume li::before { content: "•"; flex: 0 0 24px; font-size: 20px; }
.resume li.gap { margin-top: 37px; }
.resume .prof { margin-top: 20px; }
.resume h4 { font-size: 13px; line-height: 18px; margin-top: 17px; }
.notes { padding: 18px 24px 0 19px; font: 16px/19px "Liberation Serif", "Times New Roman", serif; }
.notes hr { width: 200px; margin: 0 0 2px; border: 0; border-top: 1px solid #000; }
.notes p { margin: 0 0 19px; }
.notes p + hr { margin-top: 35px; }
.docscroll { width: 15px; flex: none; display: flex; flex-direction: column; background: #efefef; }
.docscroll button { height: 18px; width: 15px; }
.docscroll .bar { flex: 0 1 485px; background: #cdcdcd; }
.docscroll .bar.short { flex-basis: 123px; }
.docscroll .end { margin-top: auto; }
.vsplit { display: flex; flex-direction: column; align-items: center; }
.vsplit span { flex: 1; width: 6px; background: #646464; }
.vsplit button { width: 100%; height: 15px; border-top: 1px solid #646464; background: #efefef; }
.vsplit button:last-child { border-bottom: 1px solid #646464; height: 16px; }

.status { display: flex; height: 20px; flex: none; gap: 2px; padding-top: 2px; line-height: 15px; white-space: nowrap; align-items: stretch; }
.status span { padding: 1px 0 0 4px; border: solid #a0a0a0; border-width: 1px 0 0 1px; border-right: 1px solid #fff; }
.status .ready { width: 50px; }
.status .path { flex: 1; }
.status .user { width: 289px; }
.status .owner { width: 144px; }
.status svg { align-self: flex-end; }
```
